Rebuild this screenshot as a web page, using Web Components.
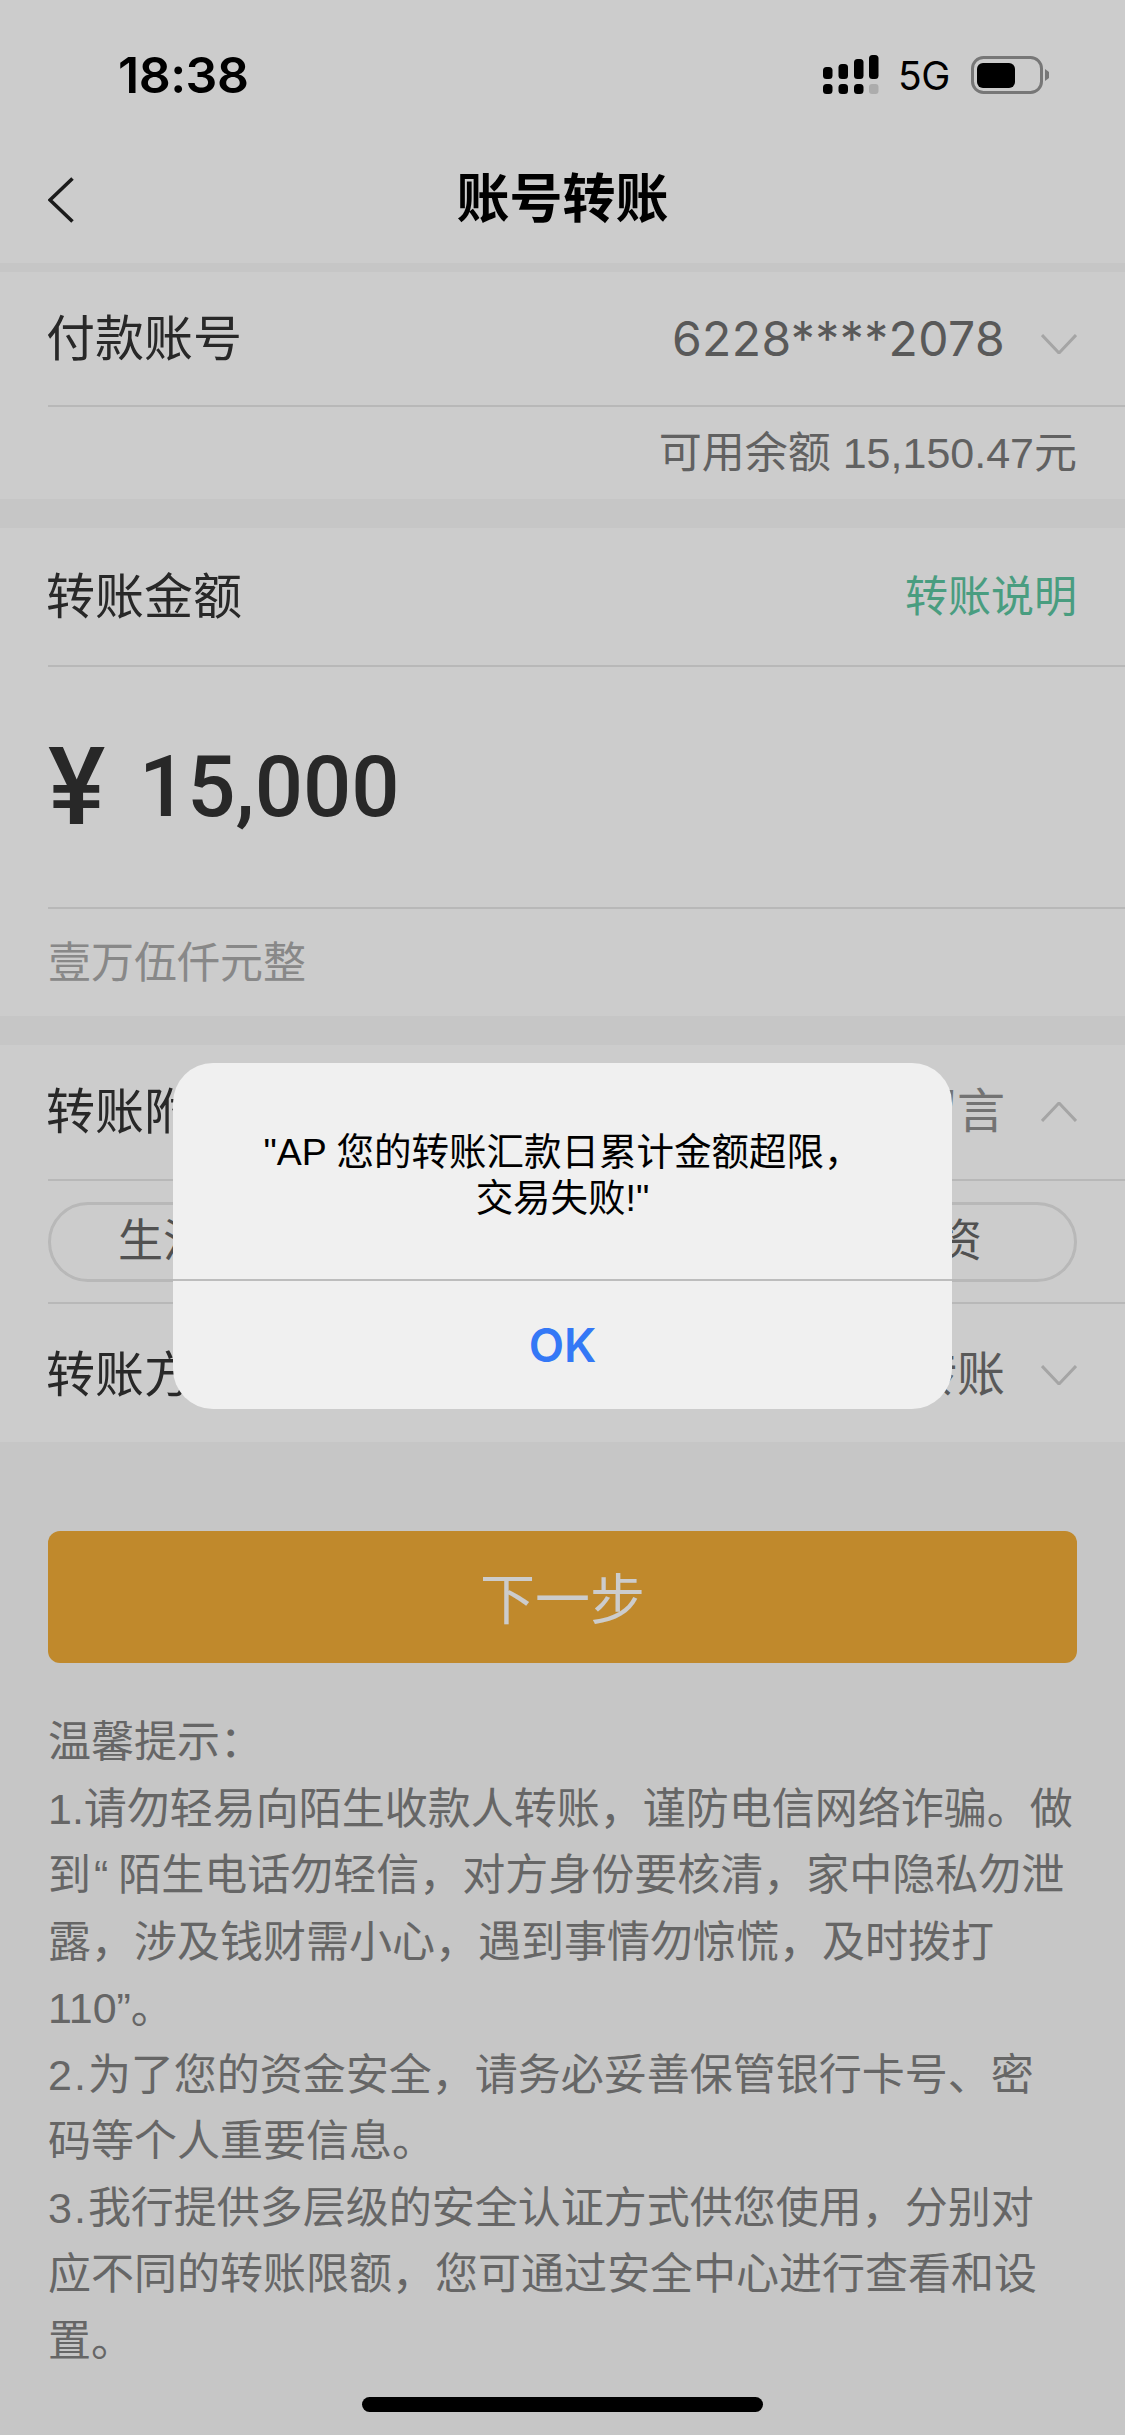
<!DOCTYPE html>
<html lang="zh-CN">
<head>
<meta charset="utf-8">
<title>账号转账</title>
<style>
html,body{margin:0;padding:0;background:#fff}
body{font-family:"Liberation Sans","Noto Sans CJK SC",sans-serif;color:#333}
</style>
</head>
<body>
<bank-screen>
  <status-bar time="18:38" net="5G"></status-bar>
  <nav-bar>账号转账</nav-bar>
  <form-section>
    <form-row><span>付款账号</span><span slot="value" style="font-family:Inter,'Liberation Sans',sans-serif;letter-spacing:.4px;color:#707070;margin-right:36px">6228****2078</span><chev-icon slot="icon" dir="down" style="margin-top:10px"></chev-icon></form-row>
    <note-row align="end" tone="#7a7a7a">可用余额 15,150.47元</note-row>
  </form-section>
  <form-section>
    <form-row height="139"><span>转账金额</span><span slot="value" style="color:#5cc5a0;font-size:43px">转账说明</span></form-row>
    <amount-row symbol="¥" value="15,000"></amount-row>
    <note-row tone="#aaaaaa" height="107" line="no">壹万伍仟元整</note-row>
  </form-section>
  <form-section>
    <form-row height="136"><span>转账附言</span><span slot="value" style="color:#909090;margin-right:36px">添加留言</span><chev-icon slot="icon" dir="up"></chev-icon></form-row>
    <pill-row><tag-pill>生活费</tag-pill><tag-pill>工资</tag-pill></pill-row>
    <form-row height="138" line="no"><span>转账方式</span><span slot="value" style="color:#707070;margin-right:36px">普通转账</span><chev-icon slot="icon" dir="down"></chev-icon></form-row>
  </form-section>
  <action-button>下一步</action-button>
  <tips-block>
    <div>温馨提示：</div>
    <div>1.请勿轻易向陌生收款人转账，谨防电信网络诈骗。做</div>
    <div>到<span style="padding:0 10px 0 3px">“</span>陌生电话勿轻信，对方身份要核清，家中隐私勿泄</div>
    <div>露，涉及钱财需小心，遇到事情勿惊慌，及时拨打</div>
    <div>110”。</div>
    <div><span style="letter-spacing:2px">2.</span>为了您的资金安全，请务必妥善保管银行卡号、密</div>
    <div>码等个人重要信息。</div>
    <div><span style="letter-spacing:2px">3.</span>我行提供多层级的安全认证方式供您使用，分别对</div>
    <div>应不同的转账限额，您可通过安全中心进行查看和设</div>
    <div>置。</div>
  </tips-block>
  <alert-dialog slot="overlay" action="OK">"AP 您的转账汇款日累计金额超限，<br>交易失败!"</alert-dialog>
</bank-screen>
<script>
function def(name, css, html, init){
  customElements.define(name, class extends HTMLElement{
    constructor(){super();this.attachShadow({mode:'open'});}
    connectedCallback(){
      const h = typeof html==='function'?html(this):html;
      this.shadowRoot.innerHTML='<style>'+css+'</style>'+h;
      if(init)init(this);
    }
  });
}
def('bank-screen',`
  :host{display:block;position:relative;width:1125px;height:2435px;overflow:hidden;background:#f8f8f8}
  .dim{position:absolute;inset:0;background:rgba(0,0,0,.2)}
  .home{position:absolute;left:362px;top:2397px;width:401px;height:15px;border-radius:8px;background:#000}
`,`<slot></slot><div class="dim"></div><div class="home"></div><slot name="overlay"></slot>`);

def('status-bar',`
  :host{display:flex;align-items:center;height:150px;background:#fff;padding:0 76px 0 118px;box-sizing:border-box;color:#000}
  .t{font:600 50px Inter,"Liberation Sans",sans-serif;flex:1;letter-spacing:-.5px}
  .n{font:400 39px Inter,"Liberation Sans",sans-serif;margin:0 21px 0 19px;letter-spacing:-.4px}
  svg{display:block}
`,el=>`<span class="t">${el.getAttribute('time')}</span>
  <svg width="56" height="40" viewBox="0 0 56 40">
    <rect x="0" y="12" width="9.5" height="12" rx="3.5"/><rect x="15.5" y="9" width="9.5" height="15" rx="3.5"/><rect x="31" y="4" width="9.5" height="20" rx="3.5"/><rect x="46" y="0" width="9.5" height="24" rx="3.5"/>
    <rect x="0" y="29" width="9.5" height="10" rx="3.5"/><rect x="15.5" y="29" width="9.5" height="10" rx="3.5"/><rect x="31" y="29" width="9.5" height="10" rx="3.5"/><rect x="46" y="29" width="9.5" height="10" rx="3" fill="#d8d8d8"/>
  </svg>
  <span class="n">${el.getAttribute('net')}</span>
  <svg width="78" height="38" viewBox="0 0 78 38">
    <rect x="1.5" y="1.5" width="69" height="35" rx="11" fill="none" stroke="#959595" stroke-width="3"/>
    <rect x="6" y="7" width="38" height="25" rx="6"/>
    <path d="M74 13 L78 16 V22 L74 25 Z" fill="#959595"/>
  </svg>`);

def('nav-bar',`
  :host{display:grid;grid-template-columns:1fr auto 1fr;align-items:center;height:113px;background:#fff;padding:0 48px 13px;box-sizing:border-box}
  .ti{font-size:53px;font-weight:700;color:#000;line-height:60px}
  svg{display:block}
`,`<svg width="26" height="46" viewBox="0 0 26 46"><path d="M24.5 1.5 L2 23 L24.5 44.5" fill="none" stroke="#222" stroke-width="3.6"/></svg><div class="ti"><slot></slot></div><div></div>`);

def('form-section',`
  :host{display:block;background:#fff;margin-top:9px;margin-bottom:29px}
`,`<slot></slot>`);

def('form-row',`
  :host{display:block;padding-left:48px;font-size:48px}
  .in{display:flex;align-items:center;justify-content:space-between;padding:0 48px 0 0;box-sizing:border-box;border-bottom:2px solid #e6e6e6;color:#333;line-height:60px}
  .r{display:flex;align-items:center}
  ::slotted(span:not([slot])){font-size:49px;margin-left:-2px}
`,el=>{
  const h=el.getAttribute('height')||135, line=el.getAttribute('line')!=='no';
  return `<div class="in" style="height:${h}px;${line?'':'border-bottom:0;padding-top:4px'}"><slot></slot><div class="r"><slot name="value"></slot><slot name="icon"></slot></div></div>`;
});

def('chev-icon',`:host{display:block;width:36px;height:20px}svg{display:block}`,
 el=>{const up=el.getAttribute('dir')==='up';return `<svg width="36" height="20" viewBox="0 0 36 20"><path d="${up?'M1 19 L18 1 L35 19':'M1 1 L18 19 L35 1'}" fill="none" stroke="#cfcfcf" stroke-width="3"/></svg>`});

def('note-row',`
  :host{display:block;padding:0 48px;font-size:43px;line-height:60px}
  .in{display:flex;align-items:center;box-sizing:border-box}
`,el=>{
  const h=el.getAttribute('height')||92, end=el.getAttribute('align')==='end';
  return `<div class="in" style="height:${h}px;color:${el.getAttribute('tone')};justify-content:${end?'flex-end':'flex-start'}"><slot></slot></div>`;
});

def('amount-row',`
  :host{display:block;padding-left:48px;color:#333}
  .in{display:flex;align-items:center;height:240px;border-bottom:2px solid #e6e6e6;font-family:Roboto,"Liberation Sans",sans-serif;font-weight:500}
  .s{font-size:108px;width:91px;line-height:100px}
  .v{font-size:85px;line-height:100px}
`,el=>`<div class="in"><span class="s">${el.getAttribute('symbol')}</span><span class="v">${el.getAttribute('value')}</span></div>`);

def('pill-row',`
  :host{display:block;padding-left:48px}
  .in{display:flex;align-items:center;gap:0;padding:21px 48px 20px 0;border-bottom:2px solid #e6e6e6}
  .pills{flex:1;display:flex;justify-content:space-between;border:3px solid #e6e6e6;border-radius:40px;height:74px;align-items:center;padding:0 92px 0 67px}
`,`<div class="in"><div class="pills"><slot></slot></div></div>`);

def('tag-pill',`:host{display:block;font-size:45px;color:#666;line-height:60px}`,`<slot></slot>`);

def('action-button',`
  :host{display:flex;align-items:center;justify-content:center;height:132px;margin:89px 48px 0;border-radius:12px;background:#f0ac38;color:#fff;font-size:55px;padding-bottom:4px;box-sizing:border-box}
`,`<slot></slot>`);

def('tips-block',`
  :host{display:block;margin:46px 0 0 48px;font-size:43px;line-height:66.5px;color:#808080;white-space:nowrap}
`,`<slot></slot>`);

def('alert-dialog',`
  :host{position:absolute;left:173px;top:1063px;width:779px;height:346px;border-radius:40px;background:#f0f0f0;display:flex;flex-direction:column;overflow:hidden;color:#000}
  .m{height:218px;box-sizing:border-box;padding-top:66px;font-size:37.5px;line-height:46px;text-align:center;border-bottom:2px solid #bdbdbd;white-space:nowrap}
  .b{flex:1;display:flex;align-items:center;justify-content:center;color:#3478f6;font:600 46px Inter,"Liberation Sans",sans-serif}
`,el=>`<div class="m"><slot></slot></div><div class="b">${el.getAttribute('action')}</div>`);
</script>
</body>
</html>
